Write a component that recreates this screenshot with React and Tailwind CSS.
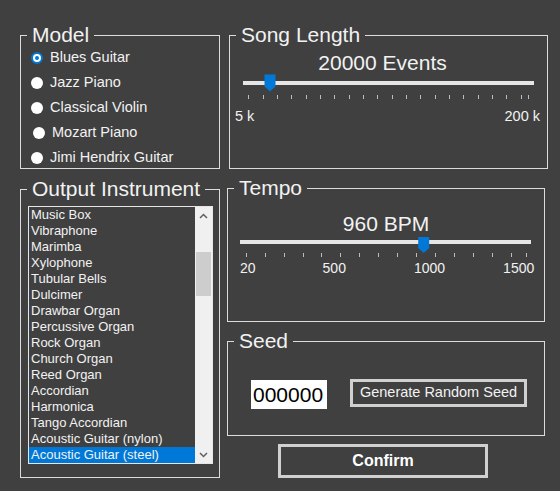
import { useState } from 'react';

const models = ['Blues Guitar', 'Jazz Piano', 'Classical Violin', 'Mozart Piano', 'Jimi Hendrix Guitar'];

const instruments = [
  'Music Box',
  'Vibraphone',
  'Marimba',
  'Xylophone',
  'Tubular Bells',
  'Dulcimer',
  'Drawbar Organ',
  'Percussive Organ',
  'Rock Organ',
  'Church Organ',
  'Reed Organ',
  'Accordian',
  'Harmonica',
  'Tango Accordian',
  'Acoustic Guitar (nylon)',
  'Acoustic Guitar (steel)',
];

// trackbar drawing: track, tick marks and the blue pointer thumb
const Trackbar = ({ width, height, x1, x2, trackY, ticks, tickY, thumbX, thumbTop, thumbBottom }) => {
  const t = thumbX;
  const thumb = `${t - 5.5},${thumbTop} ${t + 5.5},${thumbTop} ${t + 5.5},${thumbBottom - 5} ${t},${thumbBottom} ${t - 5.5},${thumbBottom - 5}`;
  return (
    <svg width={width} height={height} className="block">
      <rect x={x1} y={trackY} width={x2 - x1} height={4} fill="#e6e6e6" />
      {ticks.map((x, i) => (
        <line key={i} x1={Math.round(x) + 0.5} x2={Math.round(x) + 0.5} y1={tickY} y2={tickY + 4} stroke="#bdbdbd" strokeWidth="1" />
      ))}
      <polygon points={thumb} fill="#0078d7" />
    </svg>
  );
};

const Group = ({ title, className, children }) => (
  <fieldset className={`border border-[#dcdcdc] m-0 p-0 min-w-0 ${className}`}>
    <legend className="ml-[6px] px-[5px] text-[21px] leading-[20px]">{title}</legend>
    {children}
  </fieldset>
);

const Radio = ({ checked }) =>
  checked ? (
    <span className="w-[12px] h-[12px] rounded-full bg-white border-2 border-[#0078d7] flex items-center justify-center shrink-0">
      <span className="w-[4px] h-[4px] rounded-full bg-[#0078d7]"></span>
    </span>
  ) : (
    <span className="w-[12px] h-[12px] rounded-full bg-white shrink-0"></span>
  );

const App = () => {
  const [model, setModel] = useState(0);
  const [instrument, setInstrument] = useState(15);

  const songTicks = [];
  for (let i = 0; i < 20; i++) songTicks.push(18.3 + i * 14.33);
  songTicks.push(297.7);

  const tempoTicks = [];
  for (let i = 0; i < 15; i++) tempoTicks.push(17.7 + i * 18.94);
  tempoTicks.push(298);

  return (
    <div className="w-[560px] h-[491px] bg-[#404040] flex pl-[20px] pt-[25px] text-[#f2f2f2] font-['Liberation_Sans',Arial,sans-serif]">
      {/* left column */}
      <div className="w-[200px] flex flex-col">
        <Group title="Model" className="h-[144px]">
          <div className="flex flex-col">
            {models.map((m, i) => (
              <div
                key={m}
                onClick={() => setModel(i)}
                className={`h-[25px] flex items-center gap-[7px] text-[14.5px] ${i === 3 ? 'pl-[12px]' : 'pl-[10px]'}`}
              >
                <Radio checked={model === i} />
                <span>{m}</span>
              </div>
            ))}
          </div>
        </Group>

        <Group title="Output Instrument" className="mt-[10px] h-[299px]">
          <div className="ml-[7px] mt-[7px] w-[185px] h-[258px] border border-[#e6e6e6] flex">
            <div className="flex-1 flex flex-col">
              {instruments.map((name, i) => (
                <div
                  key={name}
                  onClick={() => setInstrument(i)}
                  className={`h-[16px] leading-[16px] pl-[2px] text-[13px] whitespace-nowrap ${instrument === i ? 'bg-[#0078d7]' : ''}`}
                >
                  {name}
                </div>
              ))}
            </div>
            <div className="w-[17px] bg-[#f0f0f0] flex flex-col">
              <div className="h-[17px] flex items-center justify-center">
                <svg width="9" height="6" viewBox="0 0 9 6">
                  <polyline points="1,5 4.5,1.5 8,5" fill="none" stroke="#606060" strokeWidth="1.5" />
                </svg>
              </div>
              <div className="flex-1 px-[1px]">
                <div className="mt-[28px] h-[44px] bg-[#cdcdcd]"></div>
              </div>
              <div className="h-[17px] flex items-center justify-center">
                <svg width="9" height="6" viewBox="0 0 9 6">
                  <polyline points="1,1 4.5,4.5 8,1" fill="none" stroke="#606060" strokeWidth="1.5" />
                </svg>
              </div>
            </div>
          </div>
        </Group>
      </div>

      {/* right column */}
      <div className="ml-[7px] w-[318px] flex flex-col">
        <Group title="Song Length" className="ml-[2px] w-[319px] h-[144px]">
          <div className="mt-[7px] text-[21px] leading-[22px] text-center pr-[12px]">20000 Events</div>
          <Trackbar
            width={317}
            height={28}
            x1={13}
            x2={304}
            trackY={7}
            ticks={songTicks}
            tickY={21}
            thumbX={40}
            thumbTop={0.5}
            thumbBottom={17.5}
          />
          <div className="mt-[4px] flex justify-between pl-[5px] pr-[7px] text-[14.5px] leading-[20px]">
            <span>5 k</span>
            <span>200 k</span>
          </div>
        </Group>

        <Group title="Tempo" className="mt-[9px] h-[144px]">
          <div className="mt-[15px] text-[21px] leading-[22px] text-center">960 BPM</div>
          <Trackbar
            width={316}
            height={23}
            x1={12}
            x2={303}
            trackY={5}
            ticks={tempoTicks}
            tickY={18}
            thumbX={195.7}
            thumbTop={2}
            thumbBottom={18}
          />
          <div className="flex text-[14px] leading-[20px]">
            <span className="ml-[12px]">20</span>
            <span className="ml-[67px]">500</span>
            <span className="ml-[68px]">1000</span>
            <span className="ml-[58px]">1500</span>
          </div>
        </Group>

        <Group title="Seed" className="mt-[9px] h-[105px]">
          <div className="mt-[29px] flex items-start pl-[23px] gap-[23px]">
            <input
              readOnly
              value="000000"
              className="w-[76px] h-[29px] bg-white text-black text-[21px] pl-[2px] outline-none"
            />
            <button className="-mt-[1px] w-[177px] h-[28px] border-[3px] border-[#d0d0d0] bg-[#404040] text-[14.5px] text-[#f2f2f2]">
              Generate Random Seed
            </button>
          </div>
        </Group>

        <button className="mt-[8px] ml-[51px] w-[210px] h-[34px] border-[3px] border-[#d0d0d0] bg-[#404040] text-[16px] font-bold text-white">
          Confirm
        </button>
      </div>
    </div>
  );
};

export default App;
